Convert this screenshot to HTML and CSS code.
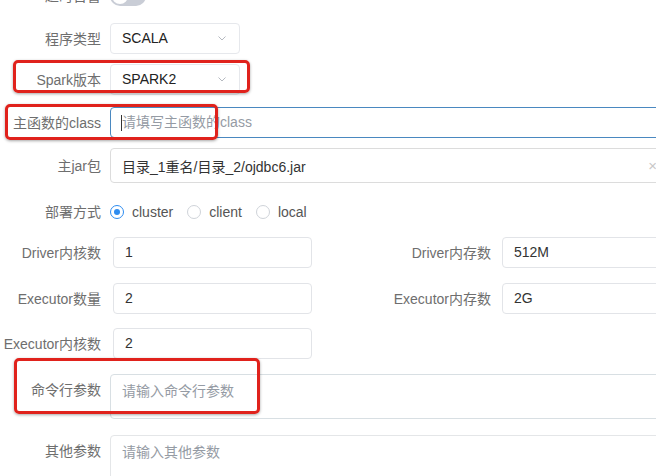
FILE: index.html
```html
<!DOCTYPE html>
<html lang="zh">
<head>
<meta charset="utf-8">
<title>Spark任务</title>
<link rel="stylesheet" href="styles.css">
</head>
<body>
<div class="page">
  <div class="row r0">
    <span class="lbl">超时告警</span>
    <span class="switch"><span class="knob"></span></span>
  </div>
  <div class="row r1">
    <span class="lbl">程序类型</span>
    <div class="select"><span>SCALA</span><svg class="chev" viewBox="0 0 8 5"><polyline points="0.5,0.5 4,4 7.5,0.5"/></svg></div>
  </div>
  <div class="row r2">
    <span class="lbl">Spark版本</span>
    <div class="select"><span>SPARK2</span><svg class="chev" viewBox="0 0 8 5"><polyline points="0.5,0.5 4,4 7.5,0.5"/></svg></div>
  </div>
  <div class="row r3">
    <span class="lbl">主函数的class</span>
    <div class="field focus"><input class="input" placeholder="请填写主函数的class"><span class="caret"></span></div>
  </div>
  <div class="row r4">
    <span class="lbl">主jar包</span>
    <div class="field tree"><span class="val">目录_1重名/目录_2/ojdbc6.jar</span><span class="clear">×</span></div>
  </div>
  <div class="row r5">
    <span class="lbl">部署方式</span>
    <div class="radios">
      <span class="radio on"><span class="dot"></span>cluster</span>
      <span class="radio"><span class="dot"></span>client</span>
      <span class="radio"><span class="dot"></span>local</span>
    </div>
  </div>
  <div class="row pair r6">
    <div class="cell left"><span class="lbl">Driver内核数</span><input class="input" value="1"></div>
    <div class="cell right"><span class="lbl">Driver内存数</span><input class="input" value="512M"></div>
  </div>
  <div class="row pair r7">
    <div class="cell left"><span class="lbl">Executor数量</span><input class="input" value="2"></div>
    <div class="cell right"><span class="lbl">Executor内存数</span><input class="input" value="2G"></div>
  </div>
  <div class="row pair r8">
    <div class="cell left"><span class="lbl">Executor内核数</span><input class="input" value="2"></div>
  </div>
  <div class="row area r9">
    <span class="lbl">命令行参数</span>
    <textarea class="ta" placeholder="请输入命令行参数"></textarea>
  </div>
  <div class="row area r10">
    <span class="lbl">其他参数</span>
    <textarea class="ta ta2" placeholder="请输入其他参数"></textarea>
  </div>

  <div class="mark m1"></div>
  <div class="mark m2"></div>
  <div class="mark m3"></div>
</div>
</body>
</html>
```
FILE: styles.css
```css
html, body {
  margin: 0;
  padding: 0;
  overflow: hidden;
  background: #fff;
}
.page {
  position: relative;
  width: 672px;
  display: flex;
  flex-direction: column;
  font-family: "Liberation Sans", "Noto Sans CJK SC", sans-serif;
  font-size: 14px;
  color: #333;
}
.row {
  display: flex;
  align-items: center;
  gap: 9px;
  height: 31px;
  margin-top: 10px;
}
.lbl {
  width: 101px;
  flex: none;
  text-align: right;
  color: #6e6e6e;
  white-space: nowrap;
  position: relative;
  top: -1px;
}
.r0 { margin-top: -14px; height: 20px; }
.r1 { margin-top: 17px; }
.r3 { margin-top: 12px; }
.r4 { height: 35px; }
.r5 { margin-top: 13px; }
.r7 { margin-top: 15px; }
.r8 { margin-top: 14px; }
.r9 { margin-top: 15px; height: 45px; }
.r10 { margin-top: 16px; height: 45px; }

.switch {
  position: relative;
  width: 36px;
  height: 20px;
  border-radius: 10px;
  background: #c9cdd6;
}
.knob {
  position: absolute;
  left: 2px;
  top: 2px;
  width: 16px;
  height: 16px;
  border-radius: 50%;
  background: #fff;
}

.select {
  box-sizing: border-box;
  width: 130px;
  height: 31px;
  border: 1px solid #e6e8ec;
  border-radius: 4px;
  display: flex;
  align-items: center;
  justify-content: space-between;
  padding: 0 13px 1px 11px;
  color: #222;
}
.chev {
  width: 8px;
  height: 5px;
  fill: none;
  stroke: #b5b9c0;
  stroke-width: 1;
}

.field {
  position: relative;
  flex: 1;
  height: 100%;
  display: flex;
}
.input {
  box-sizing: border-box;
  width: 100%;
  height: 31px;
  margin: 0;
  padding: 0 11px 1px;
  border: 1px solid #e2e4e8;
  border-radius: 4px;
  font: inherit;
  color: #333;
  background: #fff;
  outline: none;
}
.input::placeholder, .ta::placeholder {
  color: #959ba4;
  opacity: 1;
}
.focus .input {
  border-color: #4a88c0;
}
.caret {
  position: absolute;
  left: 11px;
  top: 8px;
  width: 1px;
  height: 16px;
  background: #333;
}
.tree {
  box-sizing: border-box;
  border: 1px solid #dcdcdc;
  border-radius: 4px;
  align-items: center;
  padding: 0 11px;
}
.val { color: #333; }
.clear {
  position: absolute;
  right: 14px;
  top: 8px;
  color: #c8c8c8;
  font-size: 15px;
}

.radios {
  display: flex;
  align-items: center;
  color: #555;
}
.radio {
  display: flex;
  align-items: center;
  gap: 8px;
  margin-right: 14px;
}
.dot {
  box-sizing: border-box;
  width: 14px;
  height: 14px;
  border-radius: 50%;
  border: 1px solid #cfd3d9;
  background: #fff;
  position: relative;
}
.radio.on .dot {
  border-color: #2d8cf0;
}
.radio.on .dot::after {
  content: "";
  position: absolute;
  left: 3px;
  top: 3px;
  width: 6px;
  height: 6px;
  border-radius: 50%;
  background: #2d8cf0;
}

.pair { gap: 0; }
.cell {
  display: flex;
  align-items: center;
  height: 100%;
}
.cell.left { gap: 12px; }
.cell.left .input { width: 199px; }
.cell.right {
  gap: 11px;
  margin-left: 79px;
  flex: 1;
}
.cell.right .lbl { width: 100px; }
.cell.right .input { flex: 1; }

.area { align-items: flex-start; }
.area .lbl { line-height: 34px; }
.ta {
  box-sizing: border-box;
  flex: 1;
  height: 45px;
  margin: 0;
  padding: 6px 11px;
  border: 1px solid #d8dfe3;
  border-radius: 4px;
  font: inherit;
  line-height: 20px;
  resize: none;
  outline: none;
  color: #333;
}
.ta2 { border-color: #e4e6e8; }

.mark {
  position: absolute;
  box-sizing: border-box;
  border: 3px solid #e0221c;
  border-radius: 5px;
  box-shadow: 0 1px 3px rgba(0, 0, 0, 0.35);
}
.m1 { left: 13px; top: 60px; width: 237px; height: 33px; }
.m2 { left: 5px; top: 104px; width: 213px; height: 36px; }
.m3 { left: 14px; top: 358px; width: 246px; height: 56px; }
```
